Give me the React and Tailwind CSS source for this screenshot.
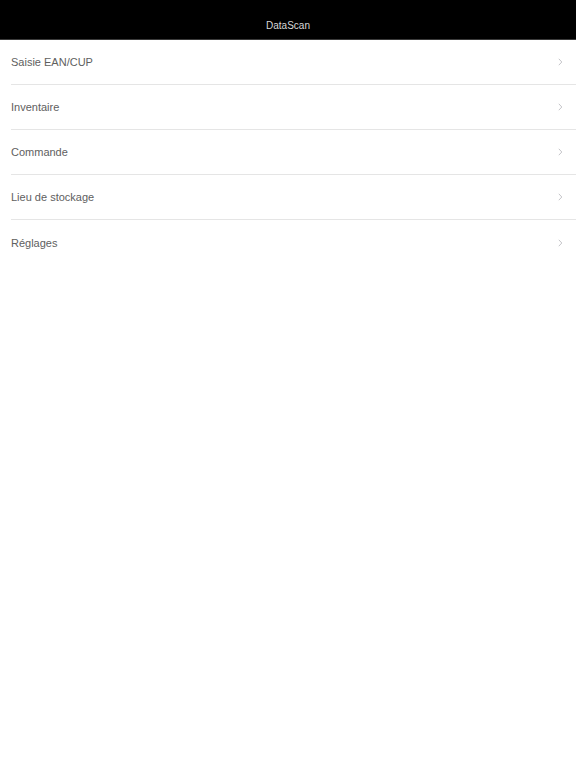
import React from "react";

const items = ["Saisie EAN/CUP", "Inventaire", "Commande", "Lieu de stockage", "Réglages"];

function Chevron() {
  return (
    <svg width="5" height="8" viewBox="0 0 5 8" fill="none" className="mr-[13px]">
      <path d="M0.8 0.8l3 3.2l-3 3.2" stroke="#c4c4c8" strokeWidth="1" />
    </svg>
  );
}

export default function App() {
  return (
    <div className="w-[576px] h-[768px] bg-white" style={{ fontFamily: '"Liberation Sans", Arial, sans-serif' }}>
      <div className="h-[40px] bg-black border-b border-[#3a3a3a] flex items-end justify-center pb-[7px]">
        <span className="text-[10px] leading-[12px] text-[#d8d8d8]">DataScan</span>
      </div>
      <div className="flex flex-col">
        {items.map((t, i) => (
          <div key={t} className="pl-[11px] h-[45px] flex">
            <div className={`flex-1 flex items-center justify-between ${i < items.length - 1 ? "border-b border-[#e5e5e5]" : ""}`}>
              <span className="text-[11px] text-[#606060] pt-[1px]">{t}</span>
              <Chevron />
            </div>
          </div>
        ))}
      </div>
    </div>
  );
}
